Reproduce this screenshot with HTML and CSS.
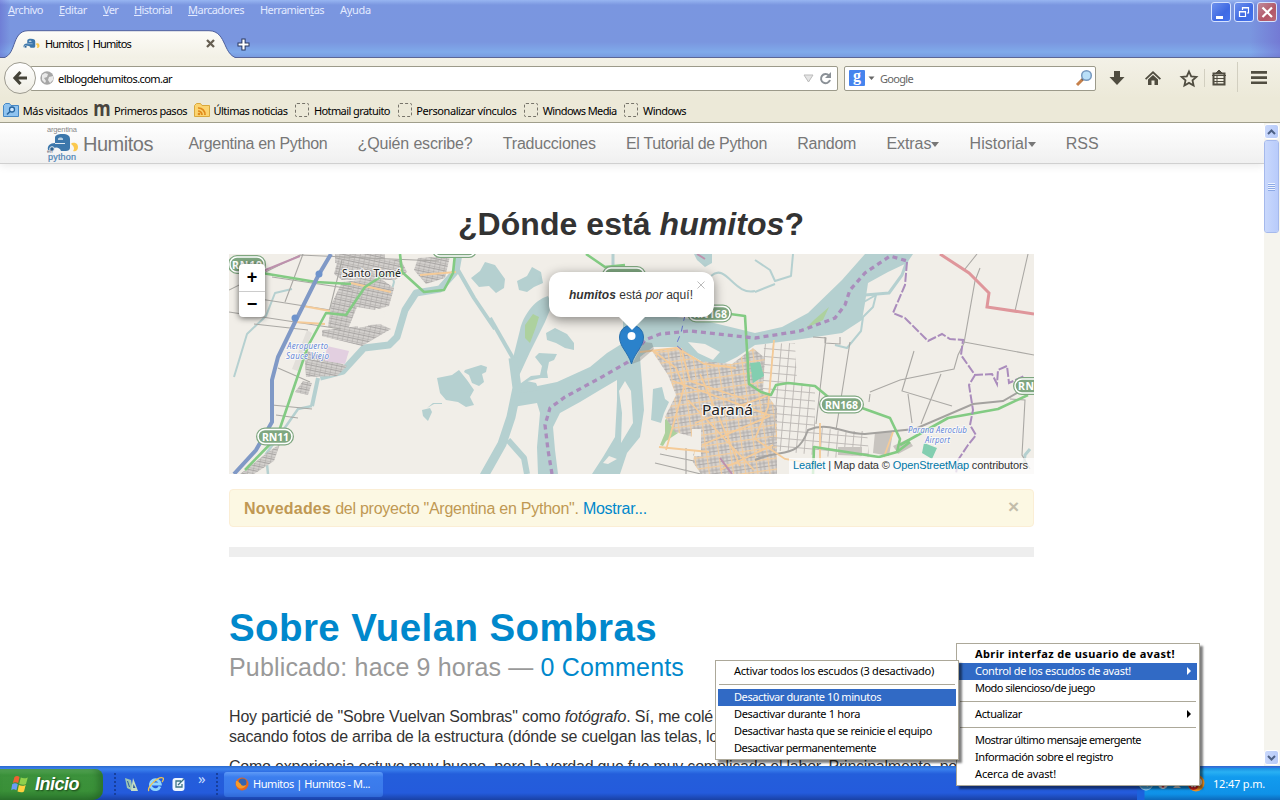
FILE: index.html
```html
<!DOCTYPE html>
<html lang="es">
<head>
<meta charset="utf-8">
<title>Humitos | Humitos</title>
<link rel="stylesheet" href="styles.css">
</head>
<body>
<div class="desktop">
  <header class="titlebar">
    <nav class="appmenu">
      <span data-w="35"><u>A</u>rchivo</span><span data-w="28"><u>E</u>ditar</span><span data-w="15"><u>V</u>er</span><span data-w="38"><u>H</u>istorial</span><span data-w="56"><u>M</u>arcadores</span><span data-w="64">Herramien<u>t</u>as</span><span data-w="31">A<u>y</u>uda</span>
    </nav>
    <div class="winbtns">
      <svg width="20" height="20" class="wb"><path d="M4 13h7v3H4z" fill="#fff"/></svg>
      <svg width="20" height="20" class="wb"><path d="M7.500 7V4.500h6v5.500H12M7 5h7M4.500 8.500h6v5h-6zM4 9h7" fill="none" stroke="#fff" stroke-width="1.200"/></svg>
      <svg width="20" height="20" class="wb wb-close"><path d="M4.500 4.500l9.500 9.500M14 4.500L4.500 14" stroke="#fff" stroke-width="2.200"/></svg>
    </div>
    <div class="tabrow">
      <div class="tab">
        <svg class="tabshape" width="242" height="29"><path d="M0 28.500C18 28 10 1 28 .7H209C228 1 222 28 240 28.500V29H0z" fill="url(#tg)"/><path d="M0 28.300C18 28 10 1 28 .7H209C228 1 222 28 240 28.300" fill="none" stroke="#50619c"/><defs><linearGradient id="tg" x2="0" y2="1"><stop stop-color="#fdfcf8"/><stop offset="1" stop-color="#f2f0e5"/></linearGradient></defs></svg>
        <svg class="favicon" width="17" height="11" viewBox="0 0 32 18"><use href="#car"/></svg>
        <span class="tabtitle" data-w="86">Humitos | Humitos</span>
        <svg class="tabclose" width="9" height="9"><path d="M1 1l7 7M8 1L1 8" stroke="#665f52" stroke-width="2.300"/></svg>
      </div>
      <svg class="newtab" width="13" height="13"><path d="M6.500 .5v12M.5 6.500h12" stroke="#28375f" stroke-width="4.200"/><path d="M6.500 1.500v10M1.500 6.500h10" stroke="#fff" stroke-width="2.200"/></svg>
    </div>
  </header>

  <div class="toolbar">
    <div class="urlbar">
      <svg class="globe" width="14" height="14"><circle cx="7" cy="7" r="6.700" fill="#a6a6a6"/><path d="M2 4l3-2 3 1-1 3-3 1 2 3-1 2-3-3zM9 6l4-1v4l-3 3-2-3z" fill="#e9e9e9"/></svg>
      <span data-w="114">elblogdehumitos.com.ar</span>
      <svg class="urlend" width="30" height="14"><path d="M1 4h9L5.500 11z" fill="#e4e4e4" stroke="#bbb"/><path d="M26 4.500A4.600 4.600 0 1 0 27 9" fill="none" stroke="#8b9197" stroke-width="2"/><path d="M28 1v6h-6z" fill="#8b9197"/></svg>
    </div>
    <div class="back"><svg width="16" height="16"><path d="M8.500 2L3 8l5.500 6M3 8h12" fill="none" stroke="#454338" stroke-width="3.200"/></svg></div>
    <div class="search">
      <span class="gicon">g</span><svg width="7" height="5"><path d="M.5 .5h6L3.500 4z" fill="#666"/></svg><span class="gname" data-w="33">Google</span>
      <svg class="mag" width="18" height="18"><path d="M2 16l6-6" stroke="#c6804a" stroke-width="3"/><path d="M7 11l2-2" stroke="#555" stroke-width="2"/><circle cx="11.500" cy="6.500" r="4.800" fill="#b9dff8" stroke="#7698be" stroke-width="1.500"/></svg>
    </div>
    <svg class="tools" width="184" height="40" viewBox="1096 58 184 40">
      <g fill="#504d40"><path d="M1114 71h6v6h4.500l-7.500 8-7.500-8h4.500z"/><path d="M1153 71l8 7.500-1.200 1.300-6.800-6.300-6.800 6.300-1.200-1.300z"/><path d="M1148 79.500l5-4.600 5 4.600V85h-3.500v-4.500h-3V85H1148z"/><path d="M1251 71h16v2.700h-16zM1251 76.200h16v2.700h-16zM1251 81.400h16v2.700h-16z" /></g>
      <path d="M1189 71.500l2.200 4.800 5.200.6-3.900 3.500 1.100 5.100-4.600-2.600-4.600 2.600 1.100-5.100-3.900-3.500 5.200-.6z" fill="none" stroke="#504d40" stroke-width="1.800"/>
      <path d="M1213.500 73.500h11v11h-11z" fill="none" stroke="#504d40" stroke-width="2"/><path d="M1216 73l3-3 3 3zM1212 75.500h14M1214 78.500h10M1214 81.500h10M1217 76v8" stroke="#504d40" fill="#504d40"/>
      <path d="M1204.500 69v18M1237.500 62v30" stroke="#d2cfc0"/>
    </svg>
  </div>
  <div class="bookmarks">
    <div class="bm"><svg width="16" height="16"><path d="M.5 3.500l2-2h4l1.500 2h7.500v11H.5z" fill="#8fc3ef" stroke="#4688c5"/><circle cx="9" cy="7.500" r="2.500" fill="#cfe8ff" stroke="#28659f" stroke-width="1.300"/><path d="M7 9.500L4 12.500" stroke="#28659f" stroke-width="1.600"/></svg><span data-w="65">Más visitados</span></div>
    <div class="bm"><span class="mm">m</span><span data-w="73">Primeros pasos</span></div>
    <div class="bm"><svg width="16" height="16"><path d="M.5 3.500l2-2h4l1.500 2h7.500v11H.5z" fill="#fbd470" stroke="#d9a83c"/><path d="M4 6a6.500 6.500 0 0 1 7 7M4 9a4 4 0 0 1 4 4" fill="none" stroke="#e08a1c" stroke-width="1.700"/><circle cx="5" cy="12" r="1.300" fill="#e08a1c"/></svg><span data-w="74">Últimas noticias</span></div>
    <div class="bm"><i class="dash"></i><span data-w="76">Hotmail gratuito</span></div>
    <div class="bm"><i class="dash"></i><span data-w="100">Personalizar vínculos</span></div>
    <div class="bm"><i class="dash"></i><span data-w="74">Windows Media</span></div>
    <div class="bm"><i class="dash"></i><span data-w="43">Windows</span></div>
  </div>

  <div class="view">
    <main class="page">
      <nav class="sitenav">
        <div class="brand">
          <svg width="34" height="38" viewBox="0 0 34 38">
            <defs><g id="car"><path d="M8 9V4c0-3 3-4 7-4 6 0 8 2 8 5v9c0 2-2 3-4 3h-5c-1-4-7-5-9-1H1c-1-4 2-7 7-7z" fill="#3c77ab"/><path d="M11 5c0-2 5-2 5 0v1h-5z" fill="#b9d0e2"/><path d="M8 9.500h10" stroke="#dfe9f1"/><circle cx="5" cy="15" r="2.300" fill="#2d628f" stroke="#e8eef3"/><path d="M24 10c1-2 7-2 7 3 0 3-2 5-5 4 2-2 1-5-2-7z" fill="#fbc94e"/></g></defs>
            <text x="1" y="6.500" font-size="7.500" textLength="30" fill="#888">argentina</text><use href="#car" transform="translate(1 9)"/><text x="1" y="28" font-size="5" fill="#667">en</text><text x="2" y="35" font-size="9" textLength="28" fill="#4d83b5" stroke="#4d83b5" stroke-width=".2">python</text>
          </svg>
          <span data-w="70">Humitos</span>
        </div>
        <div class="links">
          <span data-w="139">Argentina en Python</span><span data-w="115">¿Quién escribe?</span><span data-w="93">Traducciones</span><span data-w="141">El Tutorial de Python</span><span data-w="59">Random</span><span class="drop"><span data-w="45">Extras</span><i></i></span><span class="drop"><span data-w="58">Historial</span><i></i></span><span data-w="33">RSS</span>
        </div>
      </nav>
      <div class="content">
        <h2 class="where"><span data-w="346">¿Dónde está <em>humitos</em>?</span></h2>
        <div class="map">
          <svg class="tiles" width="805" height="220" viewBox="229 254 805 220">
            <defs>
              <pattern id="blocks" width="5" height="5" patternUnits="userSpaceOnUse" patternTransform="rotate(12)"><path fill="#d3d0cd" d="M0 0h5v5H0z"/><path d="M0 0h5M0 2.500h5M0 0v5" stroke="#a9a6a4" stroke-width="1"/></pattern>
              <pattern id="city" width="12" height="11" patternUnits="userSpaceOnUse" patternTransform="rotate(-8)"><path fill="#d6d2ce" d="M0 0h12v11H0z"/><path d="M0 4h12M0 7.500h12M4 0v11M8 0v11" stroke="#b0acaa"/><path d="M0 .5h12M.5 0v11" stroke="#f3cc9c" stroke-width="1.300"/></pattern>
              <pattern id="grid" width="8" height="8" patternUnits="userSpaceOnUse" patternTransform="rotate(5)"><path d="M0 .5h8M.5 0v8" stroke="#bbb7b3" stroke-width=".9"/></pattern>
              <g id="plates"><rect x="230" y="257" width="34" height="15" rx="7"/><rect x="258" y="429.500" width="34" height="14" rx="7"/><rect x="434" y="243" width="41" height="13" rx="6"/><rect x="604" y="268" width="40" height="14" rx="7"/><rect x="689" y="306.500" width="41" height="14" rx="7"/><rect x="821" y="397.500" width="41" height="14" rx="7"/><rect x="1015" y="379" width="40" height="14" rx="7"/></g>
            </defs>
            <rect x="229" y="254" width="805" height="220" fill="#f1eee8"/>
            <!-- water -->
            <g fill="#b5d0d0">
              <path d="M865 254L842 280 808 313 782 327 755 333 710 322 650 313 623 317 623 343 607 353 590 367 557 382 518 390 513 407 537 403 540 413 537 447 538 474H558L555 450 553 427 560 413 580 402 600 390 617 380V400L615 437 603 457 592 474H620L627 453 640 437 644 410 642 383 640 357 653 347 677 347 703 362 717 367 737 357 755 345 795 340 842 333 862 320 865 303 868 283 888 272 907 263 913 254z"/>
              <path d="M548 296C534 300 523 316 520 330L512 362 518 378 530 352 545 322 552 305z"/>
              <path d="M437 378L452 375 459 370 467 380 474 390 470 397 474 405 466 407 458 402 446 400 440 393z"/><path d="M465 370l16-5 6 2-1 5-4 2 2 8-5 4-7-3-3-8-5-3zM422 410l8-2 2 4-4 9-5-5zM427 408l6-5h9v1h-8z"/>
              <path d="M471 278l9-7 5-9 10 3 10 14-1 9-8 5-7-7-10 1zM517 281l10-5 5-9 9 5 2 11-9 4-7 5-8-2zM546 333l9-5 12 6 7 9 0 7-9-2-9-5-9-3zM694 254h18v9l-7 4-8-7z"/>
              <path d="M535 357l4-4 18 1-3 6-5 2-2 10 1 6-7 0-13 3-8 7-3-2 14-10 9-1 2-9zM519 385l8-4 9 2 3 7-18 3zM653 389l9-2 3 12 4 3-5 11-3 10-10-3 1-13z"/>
            </g>
            <path d="M688 342l17 2 15 8-7 8-15-7zM631 391l-6-10-6 10 3 22-1 30 12-20zM617 459l-9 5-5-1 6-7z" fill="#f1eee8"/>
            <g fill="none" stroke="#b5d0d0" stroke-linejoin="round">
              <path d="M490 318l24 42" stroke-width="4"/><path d="M513 358l4 30-6 29-9 27-18 32" stroke-width="9"/><path d="M508 440l16 18 3 16" stroke-width="6"/>
              <path d="M459 254l-3 17-16 18-24 4-11 17-8 27-8 8-25 3-21 23-23 6" stroke-width="7"/><path d="M318 378l-6 28" stroke-width="4"/><path d="M312 406l-14 3-14 20-18 25 2 20" stroke-width="2.500"/><path d="M458 270l16 28 21 31" stroke-width="4"/>
              <path d="M234 377l13-43 19-18 9-23 17-4M388 262l6 20-4 15M755 260l15 10 5 11 16-5 2-22M755 292l20-8M862 303l14-8-3 12-10 10-2 14-14 17-12-3" stroke-width="2"/>
              <path d="M865 295l24-2 13-18 5-14M613 254v22M1030 449l-5 6-1 8" stroke-width="3"/><path d="M711 276c15-14 23 20 44 15" stroke-width="2"/>
            </g>
            <path d="M533 314l6 3-3 10-6 16-5-5v-13zM670 415l9 4-1 14-12 8-3 5-3-1 5-12v-13zM829 307l-15 13-9 9 18-9z" fill="#add19e"/>
            <!-- built-up areas -->
            <path d="M342 280l-8-6 3-12 33-3 31 1 6 12-12 8zM342 282l38-4 14 10-5 18-14 4-18-3-9 22-20-2 3-22zM322 330l58-6 11 5-29 17-40-10zM304 350l25 8 18 8-10 10-31 1zM303 381l9 2-4 12-13-3zM335 254h50v10l-50-1zM418 258l32-2-5 22-19 6-12-14zM268 452l12-8-6 17-20 13h-14z" fill="url(#blocks)"/>
            <path d="M327 346l22 5-4 13-20-3z" fill="#e2cfe0"/><path d="M307 330l5 3-14 38-6-2z" fill="#e2dfda"/>
            <path d="M358 312l12-2-2 16-10 2zM376 308l9 4-4 12-9-2z" fill="#f1eee8"/>
            <path d="M652 351l27-4 21 14 32 3 21-16 12 10-2 32 14 18v66H701l-9-13 5-23-22-6-10-15 11-22-8-20z" fill="url(#city)"/>
            <path d="M764 344l31-1 2 39 18 5 0 40 27 4-2 27-68-8-10-45zM812 431l55 0 2 26-54-5z" fill="url(#grid)"/>
            <path d="M875 432h18l-4 24-16-3zM838 447l24 0 0 9-24-1zM893 446l15-7 5 7-15 8z" fill="#c8c4bf"/>
            <path d="M750 363l10-1 4 14-11 7zM924 443l13 5-5 11-10-6z" fill="#83ceb0"/>
            <path d="M692 429v27h9v-27zM668 449l27 1-4 24" fill="#f1eee8"/>
            <!-- secondary streets -->
            <g fill="none" stroke="#aaa8a4" stroke-width="1.100">
              <path d="M229 312l112 17M272 277l80 12M260 299l70 11M254 324l54 6M278 368l32 14M272 405l40 4M276 415l22 3M229 290l71-35 67 3 72 3M342 260l-13 52M303 254l-18 48M655 463l50 12M660 454l34 7M686 448v26M813 337l13 1-10 86M850 342l-14 88M825 337v6l15 1v-7M870 392l30-12 54-11 4-14 6-12 11-62 5-13M914 351l-12 40 50 15M941 374l-20 50M908 394l4 29M964 342l70 13M977 254l-12 15M1028 254l-13 57M1010 399l15 1-3 55 8 14M869 402l1-8"/>
            </g>
            <path d="M755 460c28-12 42 0 53-30 22-9 35 4 57 4l50-5 58-25 30-3 26-15" stroke="#a4a29f" stroke-width="2" fill="none"/>
            <g fill="none" stroke="#f5cb98" stroke-width="1.800"><path d="M640 352l37-4 27 16 32 4M652 350l24 18 8 19-18 63M681 348l9 33 55 18M774 340l-6 67-13 32 30 20 35 6 0-42M659 447l50 5M893 432l-9 25M295 322l30 2M351 283l40 9M303 306l27 5M420 275l36-3M700 374l40 92M688 400l66 70M673 381l96 34M695 423l76-29M702 445l68-29M720 470l53-25"/></g>
            <path d="M940 254l29 19 20 20-2 14 47 7" fill="none" stroke="#df969b" stroke-width="3"/>
            <path d="M697 254l8 5M720 458l12 16M258 273l42-17" fill="none" stroke="#bd91ad" stroke-width="2"/>
            <g fill="none" stroke="#83cb83" stroke-width="2.600" stroke-linejoin="round"><path d="M262 273l54 9 35 2M385 274l-20 13-19 28-20-2-18 33-31 91-32 33M378 276l24-4-2-18M402 272l22 20 20-2 9-17 2-19M586 254l19 13 20-2M730 314l15 2 4 68 12 8 10 3 5-10 12-2 27 3 18 15M862 408l28 10 10 21-3 13-18 5-65-10-1 27M900 445l48-27 50-9 30-14M897 452l13-10"/></g>
            <path d="M331 254l-13 22-21 42-19 39-6 23v42l-16 28-22 24" fill="none" stroke="#8099c6" stroke-width="4"/><circle cx="319" cy="274" r="3.500" fill="#6e93cc"/><circle cx="295" cy="318" r="3.500" fill="#6e93cc"/>
            <g fill="none" stroke="#aa8cbc"><path d="M552 474l-4-24-3-25 5-17 15-11 35-19 28-16 17-22 15-6 30-3 65 7 45-7 35-13 10-13 5-15 15-17 25-17 17 5" stroke-width="3.300" stroke-dasharray="5 4"/><path d="M907 262l-2 23-12 28 12 5 23 23 14-7 8 5 13 1-2 15 14 20-6 10 4 25-3 15 6 10-8 10-10 15-2 14M974 375l18-1 5 10 1-14 9-4 2 17 15-7" stroke-width="2" stroke-dasharray="9 2"/></g>
            <path d="M685 315l-4 18-5 12 7 6" fill="none" stroke="#6975cf" stroke-dasharray="6 5"/>
            <!-- labels -->
            <use href="#plates" fill="#7fa780" stroke="#7fa780" stroke-width="4"/><use href="#plates" fill="#7fa780" stroke="#fff" stroke-width="1.500"/>
            <g class="shtext"><text x="232" y="268.500" textLength="30">RN19</text><text x="262" y="440.500" textLength="27">RN11</text><text x="693" y="317.500" textLength="34">RN168</text><text x="825" y="408.500" textLength="33">RN168</text><text x="1018" y="390" textLength="16">RN</text></g>
            <g class="place"><text x="342" y="277" font-size="11.500" textLength="59" lengthAdjust="spacingAndGlyphs">Santo Tomé</text><text x="702" y="415" font-size="15" textLength="51" lengthAdjust="spacingAndGlyphs">Paraná</text></g>
            <g class="air"><text x="287" y="349" textLength="41">Aeropuerto</text><text x="286" y="358.500" textLength="43">Sauce Viejo</text><text x="908" y="433" textLength="59">Parana Aeroclub</text><text x="925" y="442.500" textLength="25">Airport</text></g>
          </svg>
          <div class="zoomctl"><b>+</b><b>−</b></div>
          <svg class="marker" width="44" height="44"><path d="M14 40l12-22 8 1 2 6-14 12z" fill="#555" opacity=".25"/><path d="M13.500 40C10 28 1.500 23 1.500 13a12 12 0 0 1 24 0c0 10-8.500 15-12 27z" fill="#2b82cb" stroke="#2870ad"/><circle cx="13.500" cy="12" r="4" fill="#fff"/></svg>
          <div class="popup"><span data-w="124"><b><i>humitos</i></b> está <i>por</i> aquí!</span><svg width="8" height="8"><path d="M.5.5l7 7M7.500.5l-7 7" stroke="#bbb"/></svg></div>
          <div class="attrib"><span data-w="235"><a>Leaflet</a> | Map data © <a>OpenStreetMap</a> contributors</span></div>
        </div>
        <div class="alert"><span data-w="403"><b data-w="87">Novedades</b> del proyecto "Argentina en Python". <a>Mostrar...</a></span><b class="x">×</b></div>
        <div class="rule"></div>
        <h1><span data-w="428">Sobre Vuelan Sombras</span></h1>
        <h3><span data-w="455">Publicado: hace 9 horas — <a>0 Comments</a></span></h3>
        <p><span data-w="484">Hoy particié de "Sobre Vuelvan Sombras" como <i>fotógrafo</i>. Sí, me colé</span><br><span data-w="489">sacando fotos de arriba de la estructura (dónde se cuelgan las telas, lo</span></p>
        <p><span data-w="728">Como experiencia estuvo muy bueno, pero la verdad que fue muy complicado el labor. Principalmente, po</span></p>
      </div>
    </main>
    <aside class="scroll">
      <div class="sb"><svg width="9" height="6"><path d="M1 5l3.500-3.500L8 5" fill="none" stroke="#4d6185" stroke-width="2"/></svg></div>
      <div class="thumb"><i></i></div>
      <div class="sb down"><svg width="9" height="6"><path d="M1 1l3.500 3.500L8 1" fill="none" stroke="#4d6185" stroke-width="2"/></svg></div>
    </aside>
  </div>

  <footer class="taskbar">
    <div class="start">
      <svg width="18" height="18" viewBox="0 0 18 18"><path d="M3.500 2c2-1.500 3.500-1 5 0L7.200 8c-2-1-3.700-1.300-5.400 0z" fill="#ee6132"/><path d="M9.800 2.500c2 1 4 1.200 7 0L15 9c-2.200 1.200-4.200 1-6.800 0z" fill="#8fd04c"/><path d="M1.200 9.200c2-1.300 4-1 5.600 0l-1.400 6c-2-1-3.500-1.200-5.200 0z" fill="#6a9cf5"/><path d="M7.900 10c2 1 4 1.200 6.800 0l-1.700 6.500c-2 1.200-4 1-6.500 0z" fill="#ffd13f"/></svg>
      <span data-w="44">Inicio</span>
    </div>
    <i class="grip"></i>
    <div class="quick">
      <svg width="16" height="16"><path d="M1 2l6 2 2 11-6-3z" fill="#9dc6b5"/><path d="M9 2l5 13H7z" fill="#c5dec4"/><path d="M9.500 8l2 4H9z" fill="#2e5e9c"/><path d="M3.500 5l2 6" stroke="#2e5e9c"/></svg>
      <svg width="17" height="16"><path d="M13 10.500A5 5 0 1 1 13.300 8H5" fill="none" stroke="#8fd5ff" stroke-width="2.800"/><path d="M2 15C-1 12 11 0 16 2c1 .6 0 3-1 4" fill="none" stroke="#f2c550" stroke-width="1.300"/></svg>
      <svg width="16" height="16"><rect x="1.500" y="2" width="12" height="13" rx="3" fill="#eef6ff"/><path d="M10 5H5v6h6V8M7 9l6-6" fill="none" stroke="#3d7485" stroke-width="1.300"/></svg>
    </div>
    <span class="chev">»</span>
    <i class="grip"></i>
    <div class="task"><svg width="14" height="14"><circle cx="7" cy="7" r="6.500" fill="#e7671d"/><circle cx="7.500" cy="5.500" r="4" fill="#3564b0"/><path d="M1 4c3 0 3 2 5 3 0 2 3 2 5 1-1 4-8 5-10 0z" fill="#f79b2a"/></svg><span data-w="117">Humitos | Humitos - M...</span></div>
    <div class="tray">
      <svg width="66" height="20"><circle cx="7" cy="9" r="7" fill="#4db4f5" stroke="#aee0ff"/><path d="M9 6L5.500 9 9 12" stroke="#fff" stroke-width="2" fill="none"/><circle cx="24" cy="10" r="5" fill="#e4e4ec"/><path d="M20 9l4 5 4-5z" fill="#c92c39"/><path d="M34 14l4-4 4 4z" fill="#ddd"/><circle cx="57" cy="9" r="8.500" fill="#f5931f"/><circle cx="59" cy="8" r="4" fill="#fff"/><circle cx="54.500" cy="11" r="5" fill="#d82222"/><path d="M52.500 9l4 4M56.500 9l-4 4" stroke="#fff" stroke-width="1.600"/></svg>
      <span data-w="52">12:47 p.m.</span>
    </div>
  </footer>

  <div class="menu menu-main">
    <div class="mi strong"><span data-w="200">Abrir interfaz de usuario de avast!</span></div>
    <div class="mi on sub"><span data-w="156">Control de los escudos de avast!</span></div>
    <div class="mi"><span data-w="120">Modo silencioso/de juego</span></div>
    <hr>
    <div class="mi sub"><span data-w="47">Actualizar</span></div>
    <hr>
    <div class="mi"><span data-w="166">Mostrar último mensaje emergente</span></div>
    <div class="mi"><span data-w="138">Información sobre el registro</span></div>
    <div class="mi"><span data-w="81">Acerca de avast!</span></div>
  </div>
  <div class="menu menu-sub">
    <div class="mi"><span data-w="200">Activar todos los escudos (3 desactivado)</span></div>
    <hr>
    <div class="mi on"><span data-w="147">Desactivar durante 10 minutos</span></div>
    <div class="mi"><span data-w="126">Desactivar durante 1 hora</span></div>
    <div class="mi"><span data-w="198">Desactivar hasta que se reinicie el equipo</span></div>
    <div class="mi"><span data-w="142">Desactivar permanentemente</span></div>
  </div>
</div>
<script src="fit.js"></script>
</body>
</html>
```

FILE: fit.js
```js
// Tracks each label so that it fills the width given in data-w.
// Inner labels go first, so an outer one spreads only what is left.
Array.from(document.querySelectorAll('[data-w]')).reverse().forEach(function (el) {
  var natural = el.getBoundingClientRect().width;
  var inner = el.querySelector('[data-w]');
  var count = el.textContent.length - (inner ? inner.textContent.length : 0);
  el.style.letterSpacing = ((Number(el.dataset.w) - natural) / count) + 'px';
});
```

FILE: styles.css
```css
* { box-sizing: border-box; }
body { margin: 0; overflow: hidden; font: 11px/17px "Noto Sans", "Open Sans", sans-serif; color: #000; }
[data-w] { display: inline-block; white-space: nowrap; }
svg { display: block; flex: none; }
a { color: #08c; }
.desktop { position: relative; width: 1280px; height: 800px; display: flex; flex-direction: column; overflow: hidden; background: #fff; }

.titlebar { position: relative; height: 58px; flex: none; display: flex; flex-direction: column; justify-content: space-between; border-bottom: 1px solid #5b6695; background: linear-gradient(90deg, #5a50c455 0, transparent 10px calc(100% - 30px), #6a50c466 100%), linear-gradient(#97b5f1 0, #7a96e0 5px, #7a96df 42px, #80aaea 52px, #799be0 57px); }
.appmenu { display: flex; padding: 1px 0 0 8px; color: #e3eaff; align-items: flex-start; }
.appmenu > span { margin-right: 16px; }
.appmenu u { text-underline-offset: 1px; }
.winbtns { position: absolute; right: 3px; top: 2px; display: flex; gap: 3px; }
.wb { border: 1px solid #d5e2ff; border-radius: 3px; background: linear-gradient(135deg, #6d90ed, #3f6ae3 60%, #4474ef); }
.wb-close { background: linear-gradient(135deg, #c08a9c, #b25767 60%, #bc6878); }
.tabrow { display: flex; align-items: center; gap: 2px; height: 28px; margin-bottom: -1px; }
.tab { position: relative; width: 235px; height: 29px; display: flex; align-items: center; padding: 0 0 1px 23px; }
.tabshape { position: absolute; left: 0; top: 0; }
.favicon, .tabtitle, .tabclose { position: relative; }
.tabtitle { margin-left: 5px; }
.tabclose { margin-left: 75px; }

.toolbar { position: relative; height: 40px; flex: none; display: flex; align-items: center; padding-left: 30px; background: linear-gradient(#f3f1e7, #ece9d8); }
.urlbar { width: 808px; height: 25px; border: 1px solid #9c9a8a; border-radius: 2px; background: #fff; display: flex; align-items: center; padding-left: 9px; }
.globe { margin-right: 4px; }
.urlend { margin-left: auto; margin-right: 4px; }
.back { position: absolute; left: 4px; top: 4px; width: 32px; height: 32px; border: 1px solid #9d9b90; border-radius: 50%; background: linear-gradient(#fff, #efede3); display: flex; align-items: center; justify-content: center; }
.search { width: 252px; height: 25px; margin-left: 6px; border: 1px solid #9c9a8a; border-radius: 2px; background: #fff; display: flex; align-items: center; padding: 0 2px 0 4px; }
.gicon { width: 16px; height: 16px; background: #4684ee; color: #fff; font: bold 16px/12px "Liberation Serif", serif; text-align: center; border-radius: 1px; margin-right: 3px; }
.gname { color: #666; margin-left: 5px; }
.mag { margin-left: auto; }
.tools { flex: none; }
.bookmarks { height: 25px; flex: none; display: flex; align-items: center; gap: 6.4px; padding-left: 3px; background: #ece9d8; border-bottom: 1px solid #a09e8c; }
.bm { display: flex; align-items: center; gap: 4px; }
.bm [data-w] { margin-left: -0.3px; margin-right: 0.3px; }
.mm { width: 16px; font: bold 21px/12px "Noto Sans", sans-serif; color: #48443e; margin-top: -5px; display: flex; justify-content: center; transform: scaleX(.85); }
.dash { width: 14px; height: 14px; margin: 0 1px; border: 1px dashed #77746a; border-radius: 2px; }

.view { flex: none; height: 644px; display: flex; overflow: hidden; background: #fff; }
.page { width: 1264px; overflow: hidden; font-family: "Liberation Sans", Arial, sans-serif; color: #333; }
.sitenav { height: 41px; display: flex; align-items: center; border-bottom: 1px solid #d0d0d0; background: linear-gradient(#fff, #f0f0f0); box-shadow: 0 1px 9px #0000001a; padding-left: 46px; color: #777; font-size: 16px; line-height: 20px; }
.brand { width: 142.4px; display: flex; align-items: center; gap: 3px; font-size: 20px; }
.brand span, .links { padding-top: 2px; }
.brand svg { margin-top: 1px; }
.links { display: flex; gap: 30.2px; }
.drop { display: flex; align-items: center; }
.drop i { border: 4.5px solid transparent; border-width: 5px 4.5px 0; border-top-color: #777; margin-top: 1px; }
.content { width: 805px; margin-left: 229px; }
.where { margin: 39px 0 9px; font-size: 32px; line-height: 42px; text-align: center; }
.where span { margin-right: 1px; }
.map { position: relative; height: 220px; overflow: hidden; }
.shtext { font: bold 10.5px "Noto Sans", sans-serif; fill: #fff; }
.place { font-family: "Noto Sans", sans-serif; fill: #222; stroke: #ffffffd0; stroke-width: 2.5px; paint-order: stroke; }
.air { font: italic 8px "Noto Sans", sans-serif; fill: #6686d5; stroke: #ffffffd0; stroke-width: 1.5px; paint-order: stroke; }
.zoomctl { position: absolute; left: 10px; top: 10px; width: 26px; height: 53px; background: #fff; border-radius: 4px; box-shadow: 0 1px 6px #0009; display: grid; grid-template-rows: 27px 26px; text-align: center; font: bold 18px/26px "Liberation Sans", sans-serif; color: #000; }
.zoomctl b + b { border-top: 1px solid #ccc; line-height: 24px; }
.marker { position: absolute; left: 389px; top: 70px; }
.popup { position: absolute; left: 320px; top: 18px; width: 165px; height: 45px; border-radius: 12px; background: #fff; box-shadow: 0 3px 12px #00000073; padding: 15px 20px; font-size: 12px; line-height: 17px; }
.popup::after { content: ""; position: absolute; left: 70px; top: 45px; border: 13px solid transparent; border-top-color: #fff; border-bottom: 0; }
.popup svg { position: absolute; right: 9px; top: 9px; }
.attrib { position: absolute; right: 0; bottom: 0; height: 16px; padding: 0 6px 0 4px; background: #ffffffb8; font-size: 11px; line-height: 15px; }
.attrib a { color: #0078a8; }
.alert { margin-top: 15px; height: 38px; border: 1px solid #fbeed5; border-radius: 4px; background: #fcf8e3; color: #c09853; font-size: 16px; line-height: 20px; padding: 9px 14px 7px; display: flex; justify-content: space-between; }
.x { color: #c3bdaa; font-size: 19px; line-height: 15px; }
.rule { height: 10px; margin-top: 20px; background: #eee; }
h1 { margin: 50px 0 0; font-size: 38.5px; line-height: 42px; color: #08c; }
h3 { margin: 0; font-size: 25px; line-height: 36px; font-weight: normal; color: #999; }
p { margin: 22px 0 0; font-size: 16px; line-height: 20px; }
p + p { margin-top: 10px; }
p span { vertical-align: top; }

.scroll { width: 16px; flex: none; display: flex; flex-direction: column; padding: 1px 1px 0 0; background: #f5f4ee; }
.sb { height: 15px; border: 1px solid #fff; border-radius: 3px; background: linear-gradient(90deg, #c9d8fc, #b8cbf8); display: flex; align-items: center; justify-content: center; }
.thumb { margin-top: 1px; height: 93px; border: 1px solid #fff; outline: 1px solid #a5b9ec; outline-offset: -1px; border-radius: 3px; background: linear-gradient(90deg, #c9d8fc, #b8cbfb); display: flex; align-items: center; justify-content: center; }
.thumb i { width: 7px; height: 8px; background: repeating-linear-gradient(#edf3ff 0 1px, #8ca9e6 1px 2px); }
.down { margin-top: auto; margin-bottom: 2px; }

.taskbar { height: 34px; flex: none; display: flex; align-items: center; color: #fff; padding-top: 2px; margin-top: -1px; background: linear-gradient(#2b69cd 0, #3b82ee 3px, #245edb 8px, #245bdc 27px, #1941a5 100%); }
.start { width: 103px; height: 31px; display: flex; align-items: center; gap: 6px; padding: 0 0 1px 11px; border-radius: 0 8px 10px 0; background: linear-gradient(#5caf5c 0, #3c923c 6px, #3a9038 22px, #2c762e 100%); box-shadow: inset -5px 0 6px #205c2188; font: italic bold 18px/22px "Liberation Sans", sans-serif; text-shadow: 1px 1px 2px #163f16; }
.grip { width: 5px; height: 22px; margin-left: 9px; background: conic-gradient(#173f9d 25%, transparent 0) 0 0/4px 4px; }
.quick { display: flex; gap: 7px; margin-left: 7px; }
.chev { margin: -12px 0 0 11px; font-size: 15px; width: 9px; color: #c5dbff; }
.chev + .grip { margin-left: 7px; }
.task { width: 159px; height: 25px; margin-left: 5px; display: flex; align-items: center; gap: 4px; padding: 0 0 1px 11px; border-radius: 3px; background: linear-gradient(#5f9bf7, #3c7eee 5px, #3a79ea 20px, #3069d6); }
.tray { margin-left: auto; width: 143px; height: 33px; display: flex; align-items: center; gap: 8px; padding: 0 0 1px 2px; background: linear-gradient(90deg, #1c62dd 0 7px, transparent 8px), linear-gradient(#1b8ee2 0, #29b0f3 4px, #129bee 9px, #0f92e8 26px, #0c63b4); }

.menu { position: absolute; width: 244px; border: 1px solid #aca899; background: #fff; padding: 2px; box-shadow: 3px 3px 2px #00000080; }
.menu-main { left: 956px; top: 643px; }
.menu-sub { left: 715px; top: 660px; }
.mi { position: relative; height: 17px; padding-left: 16px; line-height: 15px; }
.strong { font-weight: bold; }
.on { background: #316ac5; color: #fff; }
.sub::after { content: ""; position: absolute; right: 6px; top: 4px; border: 4px solid transparent; border-left: 4px solid currentColor; border-right: 0; }
.menu hr { height: 1px; border: 0; margin: 4px 1px; background: #aca899; }
```
